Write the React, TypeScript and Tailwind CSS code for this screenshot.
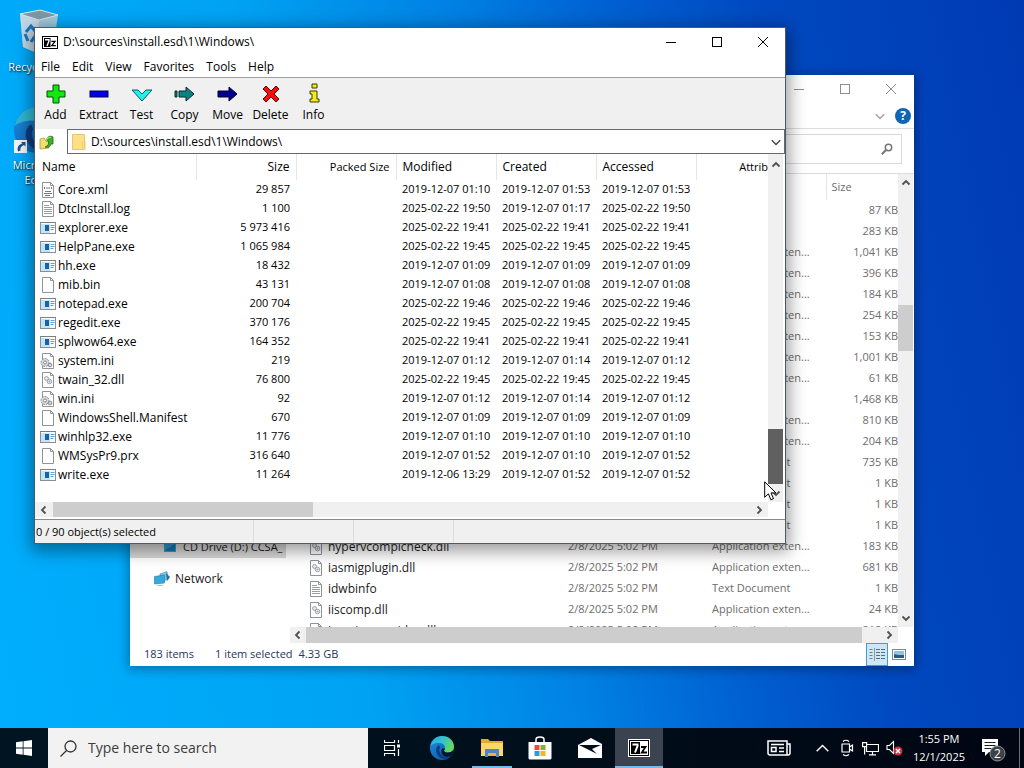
import type { ReactNode } from "react";

type FileKind = "xml" | "text" | "exe" | "blank" | "ini" | "dll";

const archiveRows: [FileKind, string, string, string, string, string][] = [
  ["xml", "Core.xml", "29 857", "2019-12-07 01:10", "2019-12-07 01:53", "2019-12-07 01:53"],
  ["text", "DtcInstall.log", "1 100", "2025-02-22 19:50", "2019-12-07 01:17", "2025-02-22 19:50"],
  ["exe", "explorer.exe", "5 973 416", "2025-02-22 19:41", "2025-02-22 19:41", "2025-02-22 19:41"],
  ["exe", "HelpPane.exe", "1 065 984", "2025-02-22 19:45", "2025-02-22 19:45", "2025-02-22 19:45"],
  ["exe", "hh.exe", "18 432", "2019-12-07 01:09", "2019-12-07 01:09", "2019-12-07 01:09"],
  ["blank", "mib.bin", "43 131", "2019-12-07 01:08", "2019-12-07 01:08", "2019-12-07 01:08"],
  ["exe", "notepad.exe", "200 704", "2025-02-22 19:46", "2025-02-22 19:46", "2025-02-22 19:46"],
  ["exe", "regedit.exe", "370 176", "2025-02-22 19:45", "2025-02-22 19:45", "2025-02-22 19:45"],
  ["exe", "splwow64.exe", "164 352", "2025-02-22 19:41", "2025-02-22 19:41", "2025-02-22 19:41"],
  ["ini", "system.ini", "219", "2019-12-07 01:12", "2019-12-07 01:14", "2019-12-07 01:12"],
  ["dll", "twain_32.dll", "76 800", "2025-02-22 19:45", "2025-02-22 19:45", "2025-02-22 19:45"],
  ["ini", "win.ini", "92", "2019-12-07 01:12", "2019-12-07 01:14", "2019-12-07 01:12"],
  ["blank", "WindowsShell.Manifest", "670", "2019-12-07 01:09", "2019-12-07 01:09", "2019-12-07 01:09"],
  ["exe", "winhlp32.exe", "11 776", "2019-12-07 01:10", "2019-12-07 01:10", "2019-12-07 01:10"],
  ["blank", "WMSysPr9.prx", "316 640", "2019-12-07 01:52", "2019-12-07 01:10", "2019-12-07 01:52"],
  ["exe", "write.exe", "11 264", "2019-12-06 13:29", "2019-12-07 01:52", "2019-12-07 01:52"],
];

const EXT = "Application exten...";
const DOC = "Text Document";
const DATE = "2/8/2025 5:02 PM";

const explorerRows: { kind?: FileKind; name?: string; date?: string; type?: string; size: string }[] = [
  { size: "87 KB" },
  { size: "283 KB" },
  { type: EXT, size: "1,041 KB" },
  { type: EXT, size: "396 KB" },
  { type: EXT, size: "184 KB" },
  { type: EXT, size: "254 KB" },
  { type: EXT, size: "153 KB" },
  { type: EXT, size: "1,001 KB" },
  { type: EXT, size: "61 KB" },
  { size: "1,468 KB" },
  { type: EXT, size: "810 KB" },
  { type: EXT, size: "204 KB" },
  { type: DOC, size: "735 KB" },
  { type: DOC, size: "1 KB" },
  { type: DOC, size: "1 KB" },
  { type: DOC, size: "1 KB" },
  { kind: "dll", name: "hypervcomplcheck.dll", date: DATE, type: EXT, size: "183 KB" },
  { kind: "dll", name: "iasmigplugin.dll", date: DATE, type: EXT, size: "681 KB" },
  { kind: "text", name: "idwbinfo", date: DATE, type: DOC, size: "1 KB" },
  { kind: "dll", name: "iiscomp.dll", date: DATE, type: EXT, size: "24 KB" },
  { kind: "dll", name: "imagingprovider.dll", date: DATE, type: EXT, size: "218 KB" },
];

function FileIcon({ kind }: { kind: FileKind }) {
  if (kind === "exe") {
    return (
      <svg viewBox="0 0 16 16" className="size-4 shrink-0" aria-hidden="true">
        <rect x="0.5" y="2.5" width="15" height="11" fill="#fff" stroke="#8b8f95" />
        <path d="M0 2.5h16" stroke="#7a7f86" />
        <rect x="1" y="4" width="9" height="9" fill="#bfe6f7" />
        <rect x="5" y="5" width="4" height="6" fill="#1f5fa8" />
        <path d="M10.500 5.500h4M10.500 7.500h4M10.500 9.500h3" stroke="#5b9fd0" />
      </svg>
    );
  }
  return (
    <svg viewBox="0 0 16 16" className="size-4 shrink-0" aria-hidden="true">
      <path d="M2.500 0.500h8l3 3v12h-11z" fill="#fff" stroke="#8f9296" />
      <path d="M10.500 0.500v3h3" fill="none" stroke="#8f9296" />
      {kind === "text" && <path d="M4 4.500h5M4 6.500h8M4 8.500h8M4 10.500h8M4 12.500h8" stroke="#9a9da1" />}
      {kind === "xml" && (
        <path d="M4 6l1-1M4 6l1 1M12 6l-1-1M12 6l-1 1M7 5v2M9 5v2M5 9.500h6M4 11.500h8M5 13.500h5" stroke="#777b80" fill="none" />
      )}
      {kind === "dll" && (
        <g fill="#e4e6e9" stroke="#9a9ea3" strokeWidth="0.900">
          <circle cx="6.500" cy="6.500" r="2" />
          <circle cx="9.500" cy="9.500" r="2.300" />
          <circle cx="9.500" cy="9.500" r="0.500" />
        </g>
      )}
      {kind === "ini" && (
        <g stroke="#85898e">
          <circle cx="5" cy="9.500" r="4" fill="#d6d9dd" strokeDasharray="2 1" />
          <circle cx="5" cy="9.500" r="1.500" fill="#fff" />
          <circle cx="10" cy="12" r="1.800" fill="#d6d9dd" />
        </g>
      )}
    </svg>
  );
}

function SevenZip({ className, light }: { className: string; light?: boolean }) {
  if (light) {
    return (
      <svg viewBox="0 0 22 18" className={className} aria-hidden="true">
        <rect width="22" height="18" fill="#fff" />
        <rect x="1.500" y="1.500" width="19" height="15" fill="#fff" stroke="#000" />
        <rect x="3" y="3" width="9" height="12" fill="#000" />
        <path d="M4.500 5.500h5v1.500l-2.500 6.500" fill="none" stroke="#fff" strokeWidth="2" />
        <path d="M13 8h4.500L13.800 13.500H19" fill="none" stroke="#000" strokeWidth="1.800" />
      </svg>
    );
  }
  return (
    <svg viewBox="0 0 16 13" className={className} aria-hidden="true">
      <rect width="16" height="13" fill="#000" />
      <rect x="1.500" y="1.500" width="13" height="10" fill="#fff" stroke="#fff" />
      <rect x="2" y="2" width="6.500" height="9" fill="#000" />
      <path d="M3 3.700h4v1.200l-2 5.100" fill="none" stroke="#fff" strokeWidth="1.400" />
      <path d="M9.300 5.300h3.700L9.800 9.700h4" fill="none" stroke="#000" strokeWidth="1.300" />
    </svg>
  );
}

function Chevron({ dir, className, thin }: { dir: "up" | "down" | "left" | "right"; className: string; thin?: boolean }) {
  const d = {
    up: "M1.500 6.500L5 3l3.500 3.500",
    down: "M1.500 3.500L5 7l3.500-3.500",
    left: "M6.500 1.500L3 5l3.500 3.500",
    right: "M3.500 1.500L7 5L3.500 8.500",
  }[dir];
  return (
    <svg viewBox="0 0 10 10" className={className} aria-hidden="true">
      <path d={d} fill="none" stroke="currentColor" strokeWidth={thin ? 1.2 : 1.8} />
    </svg>
  );
}

function WindowButtons() {
  return (
    <div className="flex">
      <button aria-label="Minimize" className="flex h-7 w-[46px] items-center justify-center">
        <svg viewBox="0 0 10 10" className="size-[10px]"><path d="M0 5.500h10" stroke="currentColor" /></svg>
      </button>
      <button aria-label="Maximize" className="flex h-7 w-[46px] items-center justify-center">
        <svg viewBox="0 0 10 10" className="size-[10px]"><rect x="0.500" y="0.500" width="9" height="9" fill="none" stroke="currentColor" /></svg>
      </button>
      <button aria-label="Close" className="flex h-7 w-[46px] items-center justify-center">
        <svg viewBox="0 0 10 10" className="size-[10px]"><path d="M0 0l10 10M10 0L0 10" stroke="currentColor" /></svg>
      </button>
    </div>
  );
}

const tools: [string, ReactNode][] = [
  ["Add", <path d="M9 2h6v6h6v6h-6v6H9v-6H3V8h6z" fill="#10e810" stroke="#064d06" />],
  ["Extract", <rect x="3" y="8" width="18" height="6" fill="#0000e8" stroke="#000050" />],
  ["Test", <path d="M2 7h6l4 4l4-4h6L12 18z" fill="#20f0f0" stroke="#0b5c5c" />],
  ["Copy", <path d="M2 8h2v6H2zM6 8h7V4l8 7l-8 7v-4H6z" fill="#0d8080" stroke="#062c2c" />],
  ["Move", <path d="M2 8h11V4l8 7l-8 7v-4H2z" fill="#000090" stroke="#00002c" />],
  ["Delete", <path d="M7 3l5 5l5-5l3 3l-5 5l5 5l-3 3l-5-5l-5 5l-3-3l5-5l-5-5z" fill="#f01010" stroke="#5c0606" />],
  ["Info", <path d="M10 1h5v4h-5zM8 8h7v8h2v3H8v-3h2v-5H8z" fill="#f4ec18" stroke="#3d3b06" />],
];

function ArchiveWindow() {
  return (
    <section aria-label="7-Zip" className="absolute top-[27px] left-[34px] flex w-[752px] flex-col border border-[#4d5a66] bg-white text-black shadow-[0_4px_16px_3px_rgba(0,0,0,0.4)]">
      <header className="-mr-px flex h-7 items-center justify-between">
        <h1 className="flex items-center gap-[5px] pl-[7px] text-xs">
          <SevenZip className="h-[13px] w-4" />
          D:\sources\install.esd\1\Windows\
        </h1>
        <WindowButtons />
      </header>
      <nav className="flex h-[22px] items-center border-b border-[#a0a0a0] text-xs">
        {["File", "Edit", "View", "Favorites", "Tools", "Help"].map((m) => (
          <button key={m} className="px-[6px]">{m}</button>
        ))}
      </nav>
      <div className="flex h-[51px] bg-[#f0f0f0]" role="toolbar">
        {tools.map(([name, icon]) => (
          <button key={name} className="flex w-[43px] flex-col items-center pt-[5px] pr-[2px] text-xs leading-5">
            <svg viewBox="0 0 24 22" className="h-[22px] w-6 shrink-0" aria-hidden="true">{icon}</svg>
            {name}
          </button>
        ))}
      </div>
      <div className="flex h-[25px]">
        <button aria-label="Up one level" className="flex w-8 items-center pl-1">
          <svg viewBox="0 0 16 16" className="size-4" aria-hidden="true">
            <path d="M1 5l4-1l1 2l4 0v8l-9 1z" fill="#f2dd72" stroke="#b99b35" strokeWidth="0.800" />
            <path d="M6 13c3-1 4-3 3.500-6H7C8 3 11 1 14 3v7h-2c-1 3-3 4-6 3z" fill="#3fae2a" stroke="#1f6d18" strokeWidth="0.800" />
            <path d="M7 7c1-3 3-4 5-3.500" fill="none" stroke="#b9ef7a" />
          </svg>
        </button>
        <div className="flex flex-1 items-center border border-[#6a6a6a] pr-[2px] pl-1">
          <svg viewBox="0 0 14 18" className="mr-1 h-[18px] w-[14px]" aria-hidden="true">
            <path d="M0.500 1.500h12v15h-12z" fill="#ffdf8a" stroke="#eac469" />
            <path d="M10.500 8v9M13 8v9" stroke="#f5cf74" />
          </svg>
          <input aria-label="Path" defaultValue="D:\sources\install.esd\1\Windows\" className="flex-1 pl-[1px] text-xs outline-none" />
          <button aria-label="Open list" className="text-[#444]"><Chevron thin dir="down" className="size-3" /></button>
        </div>
      </div>
      <div className="flex h-[348px]">
        <div className="min-w-0 flex-1 overflow-hidden">
          <table className="w-full table-fixed text-xs whitespace-nowrap">
            <colgroup>
              <col className="w-[161px]" />
              <col className="w-[100px]" />
              <col className="w-[100px]" />
              <col className="w-[100px]" />
              <col className="w-[100px]" />
              <col className="w-[100px]" />
              <col />
            </colgroup>
            <thead>
              <tr className="h-[26px] [&>th]:border-r [&>th]:border-[#e5e5e5] [&>th]:px-[6px] [&>th]:py-0 [&>th]:font-normal [&>th:first-child]:pl-[7px] [&>th:last-child]:border-0 [&>th:last-child]:px-0">
                <th className="text-left">Name</th>
                <th className="text-right">Size</th>
                <th className="text-right text-[11px]">Packed Size</th>
                <th className="text-left">Modified</th>
                <th className="text-left">Created</th>
                <th className="text-left">Accessed</th>
                <th className="text-right text-[11px]">Attrib</th>
              </tr>
            </thead>
            <tbody>
              {archiveRows.map(([kind, name, size, modified, created, accessed]) => (
                <tr key={name} className="h-[19px] [&>td]:p-0">
                  <td>
                    <span className="flex h-[19px] items-center gap-[2px] pl-[5px]">
                      <FileIcon kind={kind} />
                      {name}
                    </span>
                  </td>
                  <td className="text-right text-[11px]"><span className="pr-[6px]">{size}</span></td>
                  <td />
                  <td className="text-[11px]"><span className="pl-[6px]">{modified}</span></td>
                  <td className="text-[11px]"><span className="pl-[6px]">{created}</span></td>
                  <td className="text-[11px]"><span className="pl-[6px]">{accessed}</span></td>
                  <td />
                </tr>
              ))}
            </tbody>
          </table>
        </div>
        <div className="mr-[2px] flex w-[15px] flex-col items-center bg-[#f0f0f0] text-[#505050]">
          <Chevron dir="up" className="mt-[6px] size-[10px]" />
          <div className="mt-[259px] h-[55px] w-full bg-[#606060]" />
          <Chevron dir="down" className="mt-1 size-[10px]" />
        </div>
      </div>
      <div className="mr-[17px] flex h-[15px] items-center bg-[#f0f0f0] text-[#505050]">
        <Chevron dir="left" className="mx-1 size-[10px]" />
        <div className="h-full w-[260px] bg-[#cdcdcd]" />
        <Chevron dir="right" className="mr-1 ml-auto size-[10px]" />
      </div>
      <footer className="mt-[2px] flex h-6 items-center border-t border-[#8a8a8a] bg-[#f0f0f0] text-[11px]">
        <span className="flex h-full w-[219px] items-center border-r border-[#dcdcdc] pt-[2px] pl-[1px]">0 / 90 object(s) selected</span>
        <span className="h-full w-[100px] border-r border-[#dcdcdc]" />
        <span className="h-full w-[100px] border-r border-[#dcdcdc]" />
      </footer>
    </section>
  );
}

function ExplorerWindow() {
  return (
    <section aria-label="File Explorer" className="absolute top-[75px] left-[130px] flex w-[784px] flex-col bg-white text-xs text-[#6d6d6d] shadow-[0_2px_10px_2px_rgba(0,0,0,0.3)]">
      <header className="flex h-7 justify-end text-[#8e8e8e]"><WindowButtons /></header>
      <div className="flex h-[26px] items-center justify-end gap-[9px] border-b border-[#dcdcdc] pr-[3px]">
        <button aria-label="Expand ribbon" className="text-[#a0a0a0]"><Chevron thin dir="down" className="size-3" /></button>
        <button aria-label="Help" className="flex size-4 items-center justify-center rounded-full bg-[#0f66b4] text-xs font-bold text-white">?</button>
      </div>
      <div className="flex h-[45px] items-start justify-end border-b border-[#dcdcdc] pt-[5px] pr-3">
        <label className="flex h-[30px] w-[200px] items-center border border-[#d9d9d9] pr-2">
          <input type="text" aria-label="Search" className="min-w-0 flex-1 outline-none" />
          <svg viewBox="0 0 12 12" className="size-3" aria-hidden="true">
            <circle cx="7.500" cy="4.500" r="3.200" fill="none" stroke="#777" strokeWidth="1.500" />
            <path d="M5 7L0.800 11.200" stroke="#777" strokeWidth="2" />
          </svg>
        </label>
      </div>
      <div className="flex h-[469px]">
        <nav className="flex w-[156px] flex-col justify-end pb-[54px] text-[11px] text-[#1b1b1b]">
          <a href="#cd" className="flex h-[21px] items-center gap-[5px] bg-[#d9d9d9] pl-8 whitespace-nowrap">
            <svg viewBox="0 0 16 16" className="size-4 shrink-0" aria-hidden="true">
              <path d="M2 3h12v9H2z" fill="#2d9bd3" /><path d="M3 10l10-6v7H3z" fill="#1976a8" />
            </svg>
            CD Drive (D:) CCSA_
          </a>
          <a href="#network" className="mt-[10px] flex h-[21px] items-center gap-[5px] pl-6 text-xs">
            <svg viewBox="0 0 16 16" className="size-4 shrink-0" aria-hidden="true">
              <path d="M6 3l7-2.500l1 8l-8 2z" fill="#7cc4e8" stroke="#3a8fbd" strokeWidth="0.600" />
              <path d="M12 2l4 4l-3 4z" fill="#2b6d95" />
              <path d="M0.500 5.500l10-1.500v8l-10 1z" fill="#35a8dc" stroke="#1e7dab" strokeWidth="0.600" />
              <path d="M3 14.500h6" stroke="#8fd0ee" />
            </svg>
            Network
          </a>
        </nav>
        <div className="ml-1 flex flex-1 flex-col">
          <div className="flex h-[453px]">
            <div className="flex-1 overflow-hidden">
              <table className="w-full table-fixed text-[11px] whitespace-nowrap">
                <colgroup>
                  <col className="w-[272px]" />
                  <col className="w-[144px]" />
                  <col className="w-[120px]" />
                  <col />
                </colgroup>
                <thead>
                  <tr className="h-[26px]">
                    <th /><th />
                    <th className="border-r border-[#e5e5e5]" />
                    <th className="pl-[5px] text-left font-normal">Size</th>
                  </tr>
                </thead>
                <tbody>
                  {explorerRows.map((r, i) => (
                    <tr key={i} className="h-[21px] [&>td]:p-0">
                      <td>
                        {r.kind && (
                          <span className="flex h-[21px] items-center gap-1 pl-[18px] text-xs text-[#1b1b1b]">
                            <FileIcon kind={r.kind} />
                            {r.name}
                          </span>
                        )}
                      </td>
                      <td><span className="pl-[6px]">{r.date}</span></td>
                      <td><span className="pl-[6px]">{r.type}</span></td>
                      <td className="text-right">{r.size}</td>
                    </tr>
                  ))}
                </tbody>
              </table>
            </div>
            <div className="mr-[1px] flex w-[15px] flex-col items-center bg-[#f0f0f0] text-[#505050]">
              <Chevron dir="up" className="mt-1 size-[10px]" />
              <div className="mt-[117px] h-[46px] w-full bg-[#cdcdcd]" />
              <Chevron dir="down" className="mt-auto mb-1 size-[10px]" />
            </div>
          </div>
          <div className="mr-4 flex h-4 items-center bg-[#f0f0f0] text-[#505050]">
            <Chevron dir="left" className="mx-[3px] size-[10px]" />
            <div className="h-full w-[556px] bg-[#cdcdcd]" />
            <Chevron dir="right" className="mr-1 ml-auto size-[10px]" />
          </div>
        </div>
      </div>
      <footer className="flex h-[23px] items-center pl-[14px] text-[11px] text-[#26365c]">
        <span>183 items</span>
        <span className="ml-[21px]">1 item selected</span>
        <span className="ml-[6px]">4.33 GB</span>
        <button aria-label="Details view" className="ml-auto flex h-[23px] w-[22px] items-center justify-center border border-[#3ba0d8] bg-[#cce8f6]">
          <svg viewBox="0 0 16 14" className="h-[14px] w-4"><path d="M0.500 1.500h3M0.500 4.500h3M0.500 7.500h3M0.500 10.500h3" stroke="#a0696d" /><path d="M5.500 0v13" stroke="#8c9aa5" /><path d="M7 1.500h4M12 1.500h4M7 4.500h4M12 4.500h4M7 7.500h4M12 7.500h4M7 10.500h4M12 10.500h4" stroke="#5b6b77" /></svg>
        </button>
        <button aria-label="Large icons view" className="flex h-[22px] w-[26px] items-center justify-center pr-1">
          <svg viewBox="0 0 14 11" className="h-[11px] w-[14px]"><rect x="0.500" y="0.500" width="13" height="10" fill="#fff" stroke="#7c8994" /><path d="M2 2h10v7H2z" fill="#8ec4e4" /><path d="M2 5l4 1l6 0v3H2z" fill="#2c5b82" /></svg>
        </button>
      </footer>
    </section>
  );
}

function EdgeIcon({ className, id }: { className: string; id: string }) {
  return (
    <svg viewBox="0 0 24 24" className={className} aria-hidden="true">
      <defs>
        <linearGradient id={`${id}a`} x1="0" y1="0" x2="1" y2="0.400">
          <stop offset="0" stopColor="#2aa9e6" /><stop offset="0.600" stopColor="#35c6c6" /><stop offset="1" stopColor="#66d85c" />
        </linearGradient>
        <linearGradient id={`${id}b`} x1="0" y1="0" x2="1" y2="1">
          <stop offset="0" stopColor="#1b8fe0" /><stop offset="1" stopColor="#0c4f9e" />
        </linearGradient>
      </defs>
      <circle cx="12" cy="12" r="12" fill={`url(#${id}b)`} />
      <path d="M0.300 10C1.500 4 6.500 0 12 0c7 0 12 5 12 10.500c0 4-3 6-6 6c-2.500 0-4-1-4-1.800c0-.8 1-1 1-3C15 9 12.500 7 9 7C4.500 7 1 9 0.300 10z" fill={`url(#${id}a)`} />
      <path d="M9 9c-4 2-4 9 1 12.500c3 2 8 2 11-1.500c-3 1.500-7 1.300-9.500-1C9.500 17 8.500 14 10 11.500z" fill="#0a3d82" />
      <path d="M14 14.700c0 .8 1.500 1.800 4 1.800c3 0 5-1.600 5.700-3.600C23.700 16 22.500 18.500 21 20c-3 1.500-7 1-9-2c-1-1.500-1-4 .5-6c.6.900 2.500 1.200 2.500-.3c0 2-1 2.200-1 3z" fill="#04172b" />
    </svg>
  );
}

function DesktopIcons() {
  return (
    <div className="absolute top-[9px] left-0 flex w-[74px] flex-col gap-[31px] text-center text-[11px] leading-[15px] text-white [text-shadow:1px_1px_2px_#000]">
      <a href="#recycle-bin" className="flex flex-col items-center">
        <svg viewBox="0 0 48 48" className="size-12" aria-hidden="true">
          <path d="M7 5L27 1l18 5l-5 34l-16 4l-14-6z" fill="#b4cbd9" fillOpacity="0.900" />
          <path d="M7 5l19 6l19-5L27 1z" fill="#7d98a8" stroke="#d6e5ee" />
          <path d="M7 5l19 6l-2 33l-14-6z" fill="#ccdde8" fillOpacity="0.800" />
          <path d="M13 23l5-6l4 5M12 25l3 7M22 27l-4 6" fill="none" stroke="#1878c8" strokeWidth="3" />
        </svg>
        <span className="mt-[2px]">Recycle Bin</span>
      </a>
      <a href="#edge" className="mt-[2px] flex flex-col items-center">
        <span className="relative">
          <EdgeIcon id="desk" className="size-[46px]" />
          <svg viewBox="0 0 13 13" className="absolute bottom-0 left-0 size-[13px]" aria-hidden="true">
            <rect width="13" height="13" fill="#f4f4f4" />
            <path d="M7 2h4.500v4.500L10 5C7 6 6 8 6.500 10.500L4 11.500C3 8 4 4.500 8.500 3.500z" fill="#1d4f8f" />
          </svg>
        </span>
        <span className="mt-1">Microsoft Edge</span>
      </a>
    </div>
  );
}

function Taskbar() {
  return (
    <footer className="relative flex h-10 items-center bg-linear-to-r from-[#001421] via-[#000f1b] to-[#000612] text-white">
      <button aria-label="Start" className="flex h-10 w-12 items-center justify-center">
        <svg viewBox="0 0 16 16" className="size-4" aria-hidden="true"><path d="M0 2.200L6.700 1.300v6.300H0zM7.500 1.200L16 0v7.600H7.500zM0 8.400h6.700v6.300L0 13.800zM7.500 8.400H16V16l-8.500-1.200z" fill="#fff" /></svg>
      </button>
      <label className="flex h-10 w-80 items-center gap-[11px] bg-[#f2f2f2] px-3">
        <svg viewBox="0 0 17 17" className="size-[17px]" aria-hidden="true">
          <circle cx="10.500" cy="6.500" r="5.500" fill="none" stroke="#333" strokeWidth="1.300" />
          <path d="M6.500 10.500L0.500 16.500" stroke="#333" strokeWidth="1.300" />
        </svg>
        <input type="text" aria-label="Search" placeholder="Type here to search" className="flex-1 text-sm outline-none placeholder:text-[#3c3c3c]" />
      </label>
      <button aria-label="Task View" className="flex h-10 w-12 items-center justify-center">
        <svg viewBox="0 0 17 16" className="h-4 w-[17px]" aria-hidden="true">
          <path d="M0.500 0v2.500h10V0M0.500 16v-2.500h10V16M0.500 5.500h10v5h-10zM14.500 0v3M14.500 9v7" fill="none" stroke="#fff" strokeWidth="1.200" />
          <rect x="13" y="4.500" width="3" height="3" fill="#fff" />
        </svg>
      </button>
      <button aria-label="Microsoft Edge" className="ml-[2px] flex h-10 w-12 items-center justify-center"><EdgeIcon id="task" className="size-6" /></button>
      <button aria-label="File Explorer" className="mx-[6px] flex h-10 w-10 items-center justify-center border-b-2 border-[#76b9ed] pt-[2px]">
        <svg viewBox="0 0 22 18" className="h-[18px] w-[22px]" aria-hidden="true">
          <path d="M0 0h7l2 2h13v15H0z" fill="#e7a92c" />
          <path d="M0 4h22v13H0z" fill="#fbd865" />
          <path d="M4 10h14v8h-3v-4H7v4H4z" fill="#4f86bf" />
          <path d="M7 14h8v3H7z" fill="#e5b544" />
        </svg>
      </button>
      <button aria-label="Microsoft Store" className="flex h-10 w-11 items-center justify-center">
        <svg viewBox="0 0 24 24" className="size-6" aria-hidden="true">
          <path d="M8 7V3.500Q8 1 12 1q4 0 4 2.500V7" fill="none" stroke="#fff" strokeWidth="1.500" />
          <path d="M0.500 6h23v16q0 1.500-1.500 1.500H2Q.5 23.500.5 22z" fill="#fff" />
          <path d="M6.500 9h5v5h-5z" fill="#e94f2e" /><path d="M12.500 9h5v5h-5z" fill="#7cb526" />
          <path d="M6.500 15h5v5h-5z" fill="#25a0e3" /><path d="M12.500 15h5v5h-5z" fill="#f6b51e" />
        </svg>
      </button>
      <button aria-label="Mail" className="ml-1 flex h-10 w-12 items-center justify-center">
        <svg viewBox="0 0 24 20" className="h-5 w-6" aria-hidden="true">
          <path d="M0 7L13 0l11 6v14H0z" fill="#fff" />
          <path d="M1 7h22l-9 4l5 5l-8-4z" fill="#000f1b" />
        </svg>
      </button>
      <button aria-label="7-Zip" className="ml-[1px] flex h-10 w-12 items-center justify-center border-b-2 border-[#76b9ed] bg-[#3a434f] pt-[2px]">
        <SevenZip light className="h-[18px] w-[22px]" />
      </button>
      <div className="ml-auto flex h-10 items-center">
        <button aria-label="News" className="mr-[25px]">
          <svg viewBox="0 0 24 16" className="h-4 w-6" aria-hidden="true">
            <path d="M1 1h19v14H3q-2 0-2-2zM20 4h3v9q0 2-2 2h-2" fill="none" stroke="#fff" strokeWidth="1.500" />
            <path d="M4 4.500h13M12 8h5M12 11.500h5" stroke="#fff" strokeWidth="1.500" />
            <path d="M4.500 7.500h4.500v4H4.500z" fill="none" stroke="#fff" strokeWidth="1.500" />
          </svg>
        </button>
        <button aria-label="Show hidden icons" className="mr-[11px]">
          <svg viewBox="0 0 13 8" className="h-2 w-[13px]"><path d="M0.700 7.300L6.500 1.500l5.800 5.800" fill="none" stroke="#fff" strokeWidth="1.400" /></svg>
        </button>
        <button aria-label="Meet now" className="mr-2">
          <svg viewBox="0 0 14 18" className="h-[18px] w-[14px]"><path d="M2 5h7.500v8H2zM9.500 8l3-2v6l-3-2M3 2.500Q6 0 9 2.500M3 15.500Q6 18 9 15.500" fill="none" stroke="#fff" strokeWidth="1.200" /></svg>
        </button>
        <button aria-label="Network" className="mr-[7px]">
          <svg viewBox="0 0 17 15" className="h-[15px] w-[17px]"><path d="M5 3.500h11.500v7H4.500V6M10.500 10.500v3M7 13.900h7" fill="none" stroke="#fff" strokeWidth="1.200" /><path d="M0.600 1.600h4v4h-4zM2.600 5.600v8" fill="none" stroke="#fff" strokeWidth="1.200" /></svg>
        </button>
        <button aria-label="Volume muted" className="mr-[10px]">
          <svg viewBox="0 0 17 16" className="h-4 w-[17px]"><path d="M1 5.500h2.500l4-4v12l-4-4H1z" fill="none" stroke="#fff" strokeWidth="1.100" /><circle cx="12" cy="11" r="4.500" fill="#c9313f" /><path d="M10 9l4 4M14 9l-4 4" stroke="#fff" strokeWidth="1.500" /></svg>
        </button>
        <button className="mr-4 text-center text-[11px] leading-[18px]">
          <span className="block">1:55 PM</span>
          <span className="block">12/1/2025</span>
        </button>
        <button aria-label="Notifications" className="mr-3">
          <svg viewBox="0 0 26 26" className="mt-1 size-[26px]" aria-hidden="true">
            <path d="M1 2h16v13H8l-4 4v-4H1z" fill="#fff" />
            <path d="M3.500 5.500h11M3.500 8.500h11M3.500 11.500h7" stroke="#10202c" />
            <circle cx="16.500" cy="16.500" r="7.500" fill="#3d4247" stroke="#8c9094" />
            <text x="16.500" y="21" fontSize="12" textAnchor="middle" fill="#fff">2</text>
          </svg>
        </button>
        <div className="mr-1 h-10 w-px bg-[#68707a]" />
      </div>
    </footer>
  );
}

export default function App() {
  return (
    <div className="relative flex h-screen flex-col overflow-hidden bg-[linear-gradient(79deg,#00aefd_0%,#00a3f4_32%,#0083e4_50%,#0061d2_64%,#0049c0_77%,#003ab3_100%)] font-['Open_Sans','Noto_Sans',sans-serif]">
      <main className="relative flex-1">
        <DesktopIcons />
        <ExplorerWindow />
        <ArchiveWindow />
        <svg viewBox="0 0 13 20" className="absolute top-[481px] left-[764px] h-5 w-[13px]" aria-hidden="true">
          <path d="M0.700 0.800v15.500l3.700-3.500l2.500 6l2.600-1.100l-2.500-5.800h5z" fill="#fff" stroke="#000" />
        </svg>
      </main>
      <Taskbar />
    </div>
  );
}
